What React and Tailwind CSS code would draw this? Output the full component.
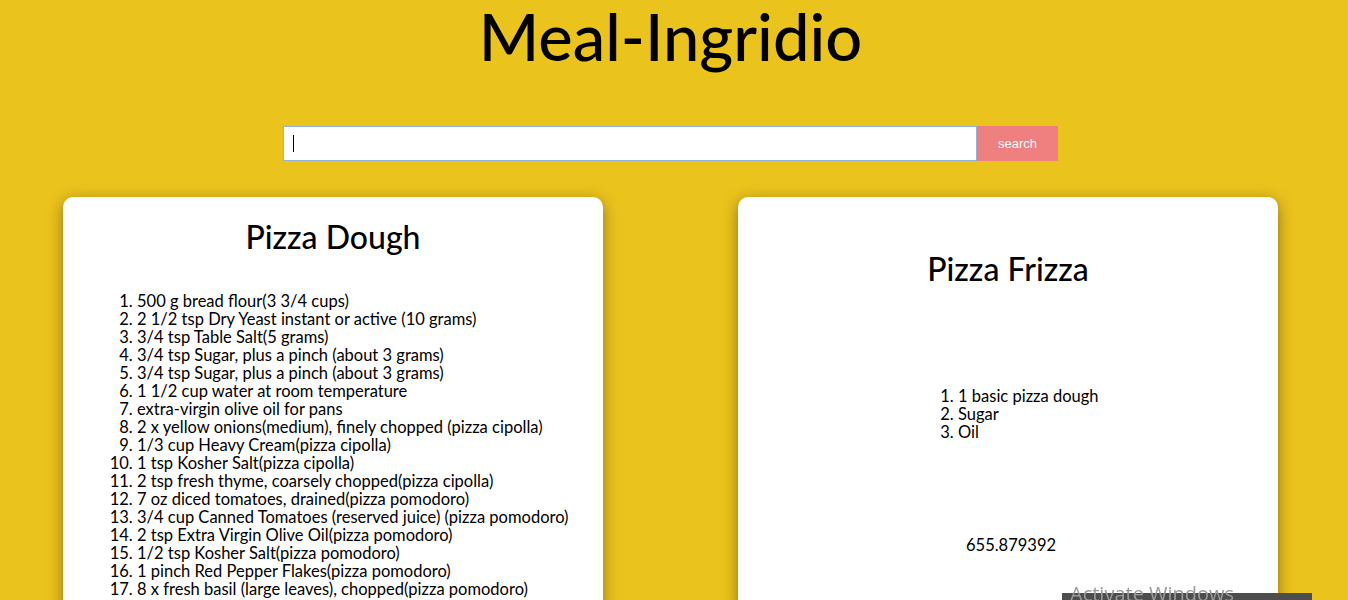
const dough = [
  '500 g bread flour(3 3/4 cups)',
  '2 1/2 tsp Dry Yeast instant or active (10 grams)',
  '3/4 tsp Table Salt(5 grams)',
  '3/4 tsp Sugar, plus a pinch (about 3 grams)',
  '3/4 tsp Sugar, plus a pinch (about 3 grams)',
  '1 1/2 cup water at room temperature',
  'extra-virgin olive oil for pans',
  '2 x yellow onions(medium), finely chopped (pizza cipolla)',
  '1/3 cup Heavy Cream(pizza cipolla)',
  '1 tsp Kosher Salt(pizza cipolla)',
  '2 tsp fresh thyme, coarsely chopped(pizza cipolla)',
  '7 oz diced tomatoes, drained(pizza pomodoro)',
  '3/4 cup Canned Tomatoes (reserved juice) (pizza pomodoro)',
  '2 tsp Extra Virgin Olive Oil(pizza pomodoro)',
  '1/2 tsp Kosher Salt(pizza pomodoro)',
  '1 pinch Red Pepper Flakes(pizza pomodoro)',
  '8 x fresh basil (large leaves), chopped(pizza pomodoro)',
];

const frizza = ['1 basic pizza dough', 'Sugar', 'Oil'];

const font = { fontFamily: 'Lato, "Noto Sans", sans-serif' };

export default function App() {
  return (
    <div className="min-h-screen bg-[#ebc31d] text-black pr-[7px]" style={font}>
      <h1 className="text-center text-[65px] leading-[78px] font-medium -mt-[3px]">Meal-Ingridio</h1>

      <div className="flex justify-center mt-[51px]">
        <div className="relative">
          <input
            autoFocus
            className="w-[694px] h-[35px] bg-white border border-[#8fb3d9] px-2 outline-none caret-transparent"
          />
          <span className="absolute left-[10px] top-[9px] w-px h-[17px] bg-black" />
        </div>
        <button
          className="w-[81px] h-[35px] bg-[#f08080] text-white text-[13px]"
          style={{ fontFamily: '"Liberation Sans", Arial, sans-serif' }}
        >
          search
        </button>
      </div>

      <div className="flex justify-center gap-[135px] mt-[36px]">
        <div className="w-[540px] bg-white rounded-[10px] shadow-[0_4px_16px_rgba(0,0,0,0.4)] pt-[20px] pb-8">
          <h2 className="text-center text-[32px] leading-[40px] font-medium">Pizza Dough</h2>
          <ol className="list-decimal pl-[74px] mt-[35px] text-[16.5px] leading-[18px]">
            {dough.map((d, i) => (
              <li key={i}>{d}</li>
            ))}
          </ol>
        </div>

        <div className="w-[540px] bg-white rounded-[10px] shadow-[0_4px_16px_rgba(0,0,0,0.4)] pt-[52px] pb-8 self-start h-[420px]">
          <h2 className="text-center text-[32px] leading-[40px] font-medium">Pizza Frizza</h2>
          <ol className="list-decimal pl-[220px] mt-[98px] text-[16.5px] leading-[18px]">
            {frizza.map((d, i) => (
              <li key={i}>{d}</li>
            ))}
          </ol>
          <p className="pl-[228px] mt-[95px] text-[16.5px] leading-[18px]">655.879392</p>
        </div>
      </div>

      <div className="fixed left-[1062px] top-[593px] w-[250px] h-[7px] bg-[#4d4d4d]" />
      <div
        className="fixed left-[1070px] top-[582px] text-[20px] leading-[24px] text-[#9a9a9a]"
        style={{ fontFamily: '"Open Sans", sans-serif' }}
      >
        Activate Windows
      </div>
    </div>
  );
}
